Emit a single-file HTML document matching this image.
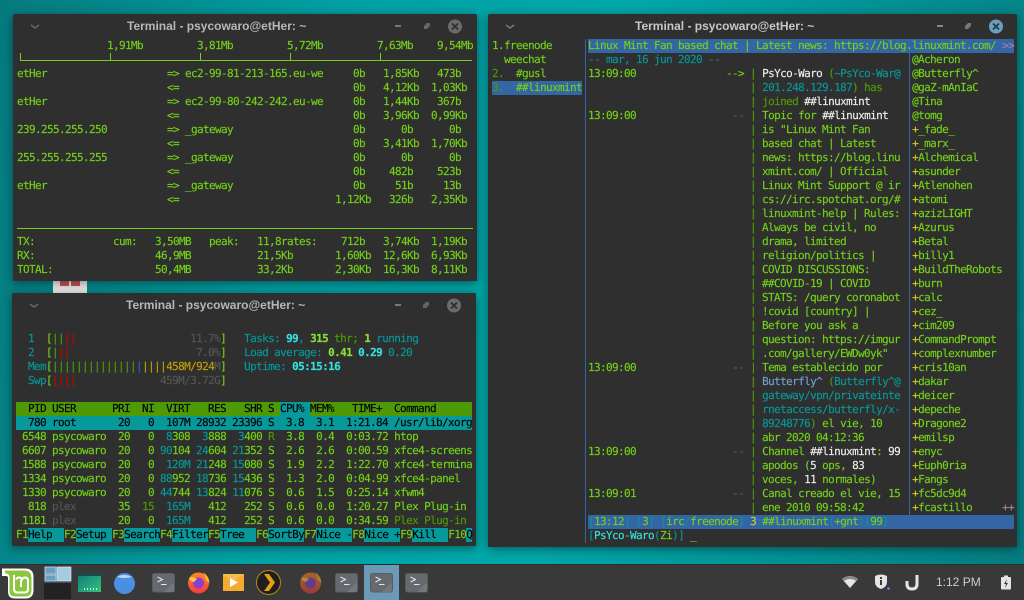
<!DOCTYPE html>
<html>
<head>
<meta charset="utf-8">
<title>Terminal</title>
<style>
html,body{margin:0;padding:0;width:1024px;height:600px;overflow:hidden;background:#008f92}
#wall{position:absolute;left:0;top:0;width:1024px;height:600px;background:linear-gradient(100deg,#067a7e 0%,#00a0a3 30%,#00a8aa 55%,#057c80 100%)}
.abs{position:absolute}
.win{position:absolute;background:#2f2f2f;box-shadow:0 2px 10px rgba(0,0,0,.45);border-radius:2px 2px 0 0}
.ttl{position:absolute;font:bold 12px "Liberation Sans",sans-serif;color:#b4b8bc;white-space:pre;line-height:16px}
pre{position:absolute;margin:0;font-family:"DejaVu Sans Mono",monospace;font-size:11px;line-height:14px;letter-spacing:-.622px;color:#73d216;white-space:pre;text-rendering:geometricPrecision;-webkit-text-stroke:.15px}
.t{color:#06989a}.d{color:#4e9a06}.r{color:#cc0000}.y{color:#c4a000}.b{color:#3465a4}.w{color:#eeeeec}.k{color:#555753}.c{color:#34e2e2}.p{color:#75507b}.l{color:#729fcf}.n{color:#000}.g{color:#8ae234}.v{color:#d4d020}.m{color:#ad7fa8}
.band{position:absolute}
</style>
</head>
<body>
<div id="wall"></div>

<div class="abs" style="left:53px;top:275px;width:34px;height:20px;background:#eeeeee"></div>
<div class="abs" style="left:60px;top:281px;width:9px;height:5px;background:#c9555a"></div>
<div class="abs" style="left:71px;top:281px;width:9px;height:5px;background:#c9555a"></div>

<!-- window 1 -->
<div class="win" style="left:13px;top:14px;width:464px;height:267px"></div>
<div class="ttl" style="left:127px;top:18px">Terminal - psycowaro@etHer: ~</div>
<svg class="abs" style="left:13px;top:14px" width="464" height="26"><path d="M18 11l4 3 4-3" fill="none" stroke="#666" stroke-width="1.6"/><rect x="382" y="11" width="6" height="2" fill="#777"/><path d="M414 9h3v3l-3 3h-3v-3z" fill="#666"/><circle cx="442" cy="12.500" r="7" fill="#6a6a6a"/><path d="M439 9.500l6 6M445 9.500l-6 6" stroke="#2f2f2f" stroke-width="1.800"/></svg>
<div class="band" style="left:20px;top:60px;width:452px;height:1px;background:#73d216"></div>
<div class="band" style="left:20px;top:53px;width:1px;height:8px;background:#73d216"></div>
<div class="band" style="left:110px;top:53px;width:1px;height:8px;background:#73d216"></div>
<div class="band" style="left:200px;top:53px;width:1px;height:8px;background:#73d216"></div>
<div class="band" style="left:290px;top:53px;width:1px;height:8px;background:#73d216"></div>
<div class="band" style="left:380px;top:53px;width:1px;height:8px;background:#73d216"></div>
<div class="band" style="left:17px;top:228px;width:456px;height:1px;background:#73d216"></div>
<pre style="left:17px;top:39px">               1,91Mb         3,81Mb         5,72Mb         7,63Mb    9,54Mb

etHer                    => ec2-99-81-213-165.eu-we     0b   1,85Kb   473b
                         &lt;=                             0b   4,12Kb  1,03Kb
etHer                    => ec2-99-80-242-242.eu-we     0b   1,44Kb   367b
                         &lt;=                             0b   3,96Kb  0,99Kb
239.255.255.250          => _gateway                    0b      0b      0b
                         &lt;=                             0b   3,41Kb  1,70Kb
255.255.255.255          => _gateway                    0b      0b      0b
                         &lt;=                             0b    482b    523b
etHer                    => _gateway                    0b     51b     13b
                         &lt;=                          1,12Kb   326b   2,35Kb


TX:             cum:   3,50MB   peak:   11,8rates:    712b   3,74Kb  1,19Kb
RX:                    46,9MB           21,5Kb       1,60Kb  12,6Kb  6,93Kb
TOTAL:                 50,4MB           33,2Kb       2,30Kb  16,3Kb  8,11Kb</pre>

<!-- window 2 -->
<div class="win" style="left:12px;top:293px;width:464px;height:253px"></div>
<div class="ttl" style="left:126px;top:297px">Terminal - psycowaro@etHer: ~</div>
<svg class="abs" style="left:12px;top:293px" width="464" height="26"><path d="M18 11l4 3 4-3" fill="none" stroke="#666" stroke-width="1.6"/><rect x="383" y="11" width="6" height="2" fill="#777"/><path d="M414 9h3v3l-3 3h-3v-3z" fill="#666"/><circle cx="442" cy="12.500" r="7" fill="#6a6a6a"/><path d="M439 9.500l6 6M445 9.500l-6 6" stroke="#2f2f2f" stroke-width="1.800"/></svg>
<div class="band" style="left:16px;top:402px;width:456px;height:14px;background:#4e9a06"></div>
<div class="band" style="left:280px;top:402px;width:30px;height:14px;background:#06989a"></div>
<div class="band" style="left:16px;top:416px;width:456px;height:14px;background:#06989a"></div>
<div class="band" style="left:28px;top:528px;width:36px;height:14px;background:#06989a"></div>
<div class="band" style="left:76px;top:528px;width:36px;height:14px;background:#06989a"></div>
<div class="band" style="left:124px;top:528px;width:36px;height:14px;background:#06989a"></div>
<div class="band" style="left:172px;top:528px;width:36px;height:14px;background:#06989a"></div>
<div class="band" style="left:220px;top:528px;width:36px;height:14px;background:#06989a"></div>
<div class="band" style="left:268px;top:528px;width:36px;height:14px;background:#06989a"></div>
<div class="band" style="left:316px;top:528px;width:36px;height:14px;background:#06989a"></div>
<div class="band" style="left:364px;top:528px;width:36px;height:14px;background:#06989a"></div>
<div class="band" style="left:412px;top:528px;width:36px;height:14px;background:#06989a"></div>
<div class="band" style="left:466px;top:528px;width:6px;height:14px;background:#06989a"></div>
<pre style="left:16px;top:332px"><span class="t">  1  </span>[<span class="d">||</span><span class="r">||</span>                   <span class="k">11.7%</span>]   <span class="t">Tasks: </span><span class="c"><b>99</b></span><span class="t">, </span><span class="g"><b>315</b></span><span class="d"> thr; </span><span class="g"><b>1</b></span><span class="t"> running</span>
<span class="t">  2  </span>[<span class="d">|</span><span class="r">||</span>                     <span class="k">7.0%</span>]   <span class="t">Load average: </span><span class="g"><b>0.41</b></span> <span class="c"><b>0.29</b></span><span class="t"> 0.20</span>
<span class="t">  Mem</span>[<span class="d">||||||||||||||</span><span class="b">|</span><span class="y">||||458M/924</span><span class="k">M</span>]   <span class="t">Uptime: </span><span class="c"><b>05:15:16</b></span>
<span class="t">  Swp</span>[<span class="r">||||</span>              <span class="k">459M/3.72G</span>]

<span class="n">  PID USER      PRI  NI  VIRT   RES   SHR S CPU% MEM%   TIME+  Command</span>
<span class="n">  780 root       20   0  107M 28932 23396 S  3.8  3.1  1:21.84 /usr/lib/xorg</span>
 6548 psycowaro  20   0  <span class="t">8</span>308  <span class="t">3</span>888  <span class="t">3</span>400 <span class="d">R</span>  3.8  0.4  0:03.72 htop
 6607 psycowaro  20   0 <span class="t">90</span>104 <span class="t">24</span>604 <span class="t">21</span>352 S  2.6  2.6  0:00.59 xfce4-screens
 1588 psycowaro  20   0  <span class="t">120M</span> <span class="t">21</span>248 <span class="t">15</span>080 S  1.9  2.2  1:22.70 xfce4-termina
 1334 psycowaro  20   0 <span class="t">88</span>952 <span class="t">18</span>736 <span class="t">15</span>436 S  1.3  2.0  0:04.99 xfce4-panel
 1330 psycowaro  20   0 <span class="t">44</span>744 <span class="t">13</span>824 <span class="t">11</span>076 S  0.6  1.5  0:25.14 xfwm4
  818 <span class="k">plex</span>       35  <span class="d">15</span>  <span class="t">165M</span>   412   252 S  0.6  0.0  1:20.27 Plex Plug-in
 1181 <span class="k">plex</span>       20   0  <span class="t">165M</span>   412   252 S  0.6  0.0  0:34.59 <span class="d">Plex Plug-in</span>
F1<span class="n">Help</span>  F2<span class="n">Setup</span> F3<span class="n">Search</span>F4<span class="n">Filter</span>F5<span class="n">Tree</span>  F6<span class="n">SortBy</span>F7<span class="n">Nice -</span>F8<span class="n">Nice +</span>F9<span class="n">Kill</span>  F10<span class="n">Q</span></pre>

<!-- window 3 -->
<div class="win" style="left:488px;top:14px;width:529px;height:533px"></div>
<div class="ttl" style="left:635px;top:18px;color:#c4c8cc">Terminal - psycowaro@etHer: ~</div>
<svg class="abs" style="left:488px;top:14px" width="529" height="26"><path d="M18 11l4 3 4-3" fill="none" stroke="#777" stroke-width="1.6"/><rect x="449" y="11" width="6" height="2" fill="#888"/><path d="M480 9h3v3l-3 3h-3v-3z" fill="#777"/><circle cx="508" cy="12.500" r="7" fill="#6a9fc2"/><path d="M505 9.500l6 6M511 9.500l-6 6" stroke="#2a3a44" stroke-width="1.800"/></svg>
<div class="band" style="left:588px;top:39px;width:426px;height:14px;background:#3465a4"></div>
<div class="band" style="left:492px;top:81px;width:90px;height:14px;background:#3465a4"></div>
<div class="band" style="left:585px;top:39px;width:1px;height:504px;background:#3465a4"></div>
<div class="band" style="left:909px;top:53px;width:1px;height:462px;background:#3465a4"></div>
<div class="band" style="left:588px;top:515px;width:426px;height:14px;background:#3465a4"></div>
<pre style="left:492px;top:39px">1.freenode      Linux Mint Fan based chat | Latest news: https://blog.linuxmint.com/ <span class="m">&gt;&gt;</span>
  weechat       <span class="t">-- mar, 16 jun 2020 --</span>                                @Acheron
<span class="d">2.</span>  #gusl       13:09:00               --&gt; <span class="d">|</span> <span class="w">PsYco-Waro</span> <span class="d">(</span><span class="t">~PsYco-War@</span>  @Butterfly^
<span class="d">3.</span>  ##linuxmint                            <span class="d">|</span> <span class="t">201.248.129.187</span><span class="d">) has</span>     @gaZ-mAnIaC
                                           <span class="d">|</span> <span class="d">joined</span> <span class="w">##linuxmint</span>       @Tina
                13:09:00                <span class="p">--</span> <span class="d">|</span> Topic for <span class="w">##linuxmint</span>    @tomg
                                           <span class="d">|</span> is "Linux Mint Fan       <span class="v">+</span>_fade_
                                           <span class="d">|</span> based chat | Latest      <span class="v">+</span>_marx_
                                           <span class="d">|</span> news: https://blog.linu  <span class="v">+</span>Alchemical
                                           <span class="d">|</span> xmint.com/ | Official    <span class="v">+</span>asunder
                                           <span class="d">|</span> Linux Mint Support @ ir  <span class="v">+</span>Atlenohen
                                           <span class="d">|</span> cs://irc.spotchat.org/#  <span class="v">+</span>atomi
                                           <span class="d">|</span> linuxmint-help | Rules:  <span class="v">+</span>azizLIGHT
                                           <span class="d">|</span> Always be civil, no      <span class="v">+</span>Azurus
                                           <span class="d">|</span> drama, limited           <span class="v">+</span>Betal
                                           <span class="d">|</span> religion/politics |      <span class="v">+</span>billy1
                                           <span class="d">|</span> COVID DISCUSSIONS:       <span class="v">+</span>BuildTheRobots
                                           <span class="d">|</span> ##COVID-19 | COVID       <span class="v">+</span>burn
                                           <span class="d">|</span> STATS: /query coronabot  <span class="v">+</span>calc
                                           <span class="d">|</span> !covid [country] |       <span class="v">+</span>cez_
                                           <span class="d">|</span> Before you ask a         <span class="v">+</span>cim209
                                           <span class="d">|</span> question: https://imgur  <span class="v">+</span>CommandPrompt
                                           <span class="d">|</span> .com/gallery/EWDw0yk"    <span class="v">+</span>complexnumber
                13:09:00                <span class="p">--</span> <span class="d">|</span> Tema establecido por     <span class="v">+</span>cris10an
                                           <span class="d">|</span> <span class="l">Butterfly^</span> <span class="d">(</span><span class="t">Butterfly^@</span>  <span class="v">+</span>dakar
                                           <span class="d">|</span> <span class="t">gateway/vpn/privateinte</span>  <span class="v">+</span>deicer
                                           <span class="d">|</span> <span class="t">rnetaccess/butterfly/x-</span>  <span class="v">+</span>depeche
                                           <span class="d">|</span> <span class="t">89248776</span><span class="d">)</span> el vie, 10     <span class="v">+</span>Dragone2
                                           <span class="d">|</span> abr 2020 04:12:36        <span class="v">+</span>emilsp
                13:09:00                <span class="p">--</span> <span class="d">|</span> Channel <span class="w">##linuxmint</span>: <span class="w">99</span>  <span class="v">+</span>enyc
                                           <span class="d">|</span> apodos (<span class="w">5</span> ops, <span class="w">83</span>        <span class="v">+</span>Euph0ria
                                           <span class="d">|</span> voces, <span class="w">11</span> normales)      <span class="v">+</span>Fangs
                13:09:01                <span class="p">--</span> <span class="d">|</span> Canal creado el vie, 15  <span class="v">+</span>fc5dc9d4
                                           <span class="d">|</span> ene 2010 09:58:42        <span class="v">+</span>fcastillo     <span class="m">++</span>
                <span class="t">[</span>13:12<span class="t">] [</span>3<span class="t">] [</span>irc<span class="t">/</span>freenode<span class="t">]</span> <span class="v">3</span><span class="t">:</span>##linuxmint<span class="t">(</span>+gnt<span class="t">){</span>99<span class="t">}</span>
                <span class="t">[</span><span class="c">PsYco-Waro</span><span class="t">(</span>Zi<span class="t">)]</span> _</pre>

<!-- panel -->
<div class="abs" style="left:0;top:564px;width:1024px;height:36px;background:#393939;border-top:1px solid #2c2c2c;box-sizing:border-box"></div>
<div class="abs" style="left:364px;top:565px;width:35px;height:35px;background:#6b9ab8"></div>
<svg class="abs" style="left:0;top:564px" width="1024" height="36" viewBox="0 564 1024 36">
<!-- mint logo -->
<path d="M2 568.500h23q8.500 0 8.500 8.500v13q0 8.500-8 8.500H15q-7 0-7-7V578q0-2-2-2H2z" fill="#fff"/>
<path d="M4.500 570.500H24q7.500 0 7.500 7.500v12q0 6.500-6.500 6.500H15q-5.500 0-5.500-5.500V577q0-3.500-4-3.500z" fill="#8cc63f"/>
<path d="M14 575v14q0 3.500 3.500 3.500h7q3.500 0 3.500-3.500v-8q0-3.500-3-3.500q-2 0-3 2q-1-2-3-2q-2 0-3 2M21 580v7" fill="none" stroke="#fff" stroke-width="2"/>
<!-- workspaces -->
<rect x="44" y="566" width="27" height="17" fill="#3f4f5c"/>
<rect x="44" y="583" width="27" height="16" fill="#222"/>
<rect x="45" y="567" width="11" height="7" fill="#6a9fc2" stroke="#e6eef4" stroke-width=".6"/>
<rect x="45" y="575" width="11" height="6" fill="#6a9fc2" stroke="#e6eef4" stroke-width=".6"/>
<rect x="57" y="567" width="14" height="14" fill="#a4cbe2" stroke="#e6eef4" stroke-width=".6"/>
<!-- desktop -->
<defs><linearGradient id="gd" x1="0" y1="0" x2="1" y2="1"><stop offset="0" stop-color="#147a78"/><stop offset="1" stop-color="#2ec47e"/></linearGradient>
<linearGradient id="ff" x1="0" y1="0" x2="0" y2="1"><stop offset="0" stop-color="#ff8a20"/><stop offset="1" stop-color="#f23a3c"/></linearGradient></defs>
<rect x="78" y="573" width="23" height="19" fill="url(#gd)"/>
<rect x="78" y="573" width="23" height="3" fill="#1c4a4a"/>
<path d="M84 589h1M87 589h1M90 589h1M93 589h1M96 589h1" stroke="#d8f0e0" stroke-width="2"/>
<!-- blue ball -->
<circle cx="124.500" cy="583.500" r="10.500" fill="#4a90e2"/>
<path d="M117 577q7-4 15 0q-7 2-15 0z" fill="#b9d8f5"/>
<!-- terminals -->
<g id="tm"><rect x="152.500" y="573.500" width="22" height="18.500" rx="2" fill="#666a6e" stroke="#5a5d60"/><path d="M174 582v8q0 2-2 2h-8z" fill="#74787c"/><path d="M157.500 577l5 2.500-5 2.500M161 584.500h5.500" fill="none" stroke="#e4e6e8" stroke-width="1"/></g>
<use href="#tm" x="183"/><use href="#tm" x="218"/><use href="#tm" x="253"/>
<!-- firefox -->
<g id="fx"><circle cx="198.500" cy="583" r="10.500" fill="url(#ff)"/><path d="M203 572q6 4 6.500 11l-4-3q0-5-2.500-8z" fill="#ffb52e"/><circle cx="198.500" cy="583" r="5.500" fill="#8a3fd0"/><path d="M189 578q4-2 8 1l-3 3q-3 0-5-4z" fill="#ffca50"/></g>
<g opacity=".55" transform="translate(112 0)"><circle cx="198.500" cy="583" r="10.500" fill="url(#ff)"/><path d="M203 572q6 4 6.500 11l-4-3q0-5-2.500-8z" fill="#ffb52e"/><circle cx="198.500" cy="583" r="5.500" fill="#8a3fd0"/><path d="M189 578q4-2 8 1l-3 3q-3 0-5-4z" fill="#ffca50"/></g>
<!-- player -->
<rect x="223" y="574" width="21" height="17" fill="#f4ab30"/>
<path d="M223 574l10.500 8 10.500-8z" fill="#f8bc4c"/>
<path d="M230 578l8 4.500-8 4.500z" fill="#fff"/>
<!-- plex -->
<circle cx="268.500" cy="582.500" r="12" fill="#1f1f1f" stroke="#b58a1c" stroke-width="1"/>
<path d="M264 574h5l6 8.500-6 8.500h-5l6-8.500z" fill="#e5a00d"/>
<!-- tray -->
<path d="M842 579q8-6 16 0l-8 9z" fill="#e6e6e6"/>
<path d="M842 579q8-6 16 0l-2 2q-6-4-12 0z" fill="#888"/>
<path d="M875 576q6-3 12 0v6q0 5-6 7q-6-2-6-7z" fill="#e4e4e4"/>
<rect x="880" y="580" width="2" height="5" fill="#393939"/><rect x="880" y="577" width="2" height="2" fill="#393939"/>
<circle cx="888.500" cy="588.500" r="1.300" fill="#5a9ae0"/>
<path d="M917 575v9q0 5-5 5t-5-5v-3" fill="none" stroke="#e4e4e4" stroke-width="3"/>
<rect x="1001" y="577" width="10" height="12.500" rx="1" fill="#e4e4e4"/><rect x="1004" y="575.500" width="4" height="2" fill="#e4e4e4"/>
<path d="M1007 579l-3 5h2l-1 4 3-5h-2z" fill="#393939"/>
</svg>
<div class="abs" style="left:936px;top:574px;font:12px/16px 'Liberation Sans',sans-serif;color:#c6ced6;white-space:pre">1:12 PM</div>
</body>
</html>
